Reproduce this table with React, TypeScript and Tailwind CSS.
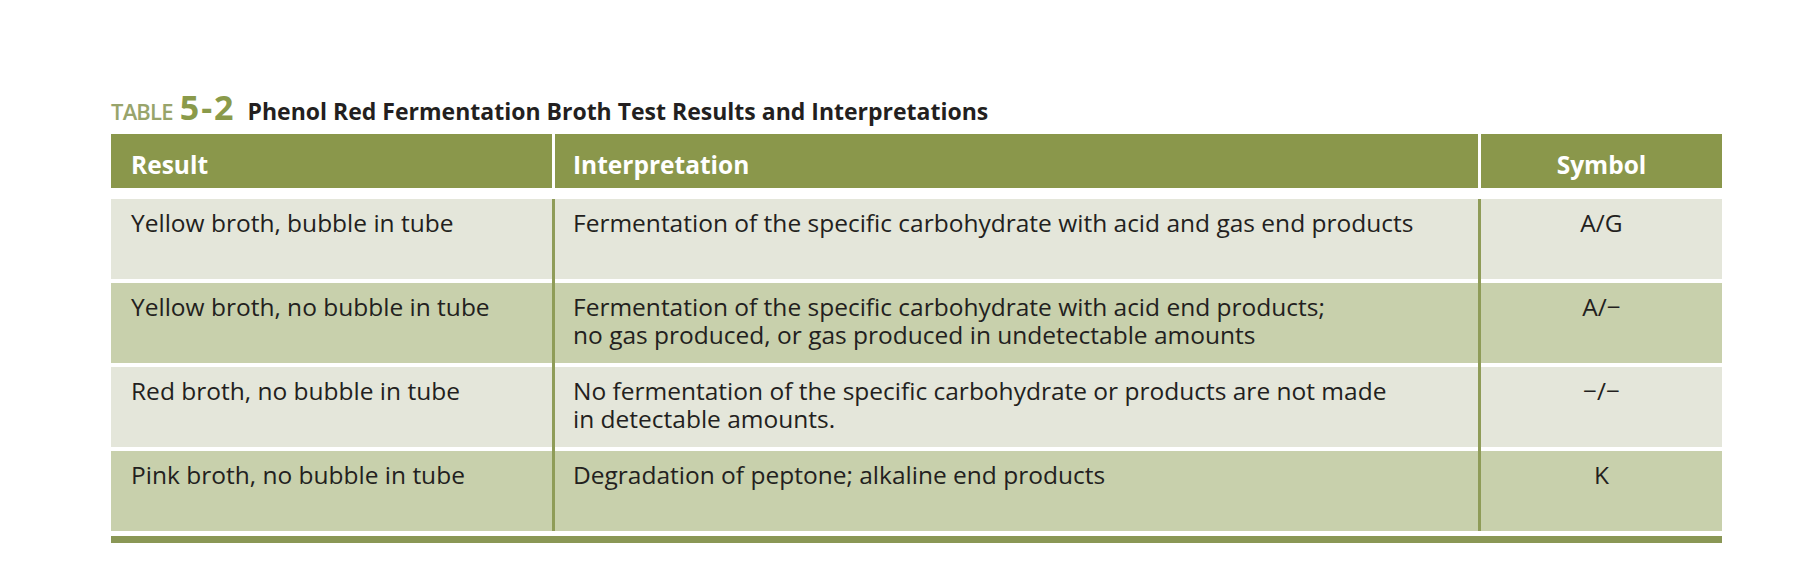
import React from "react";

type Row = { result: string; interp: string[]; symbol: string; dark: boolean };

const rows: Row[] = [
  {
    result: "Yellow broth, bubble in tube",
    interp: ["Fermentation of the specific carbohydrate with acid and gas end products"],
    symbol: "A/G",
    dark: false,
  },
  {
    result: "Yellow broth, no bubble in tube",
    interp: [
      "Fermentation of the specific carbohydrate with acid end products;",
      "no gas produced, or gas produced in undetectable amounts",
    ],
    symbol: "A/−",
    dark: true,
  },
  {
    result: "Red broth, no bubble in tube",
    interp: [
      "No fermentation of the specific carbohydrate or products are not made",
      "in detectable amounts.",
    ],
    symbol: "−/−",
    dark: false,
  },
  {
    result: "Pink broth, no bubble in tube",
    interp: ["Degradation of peptone; alkaline end products"],
    symbol: "K",
    dark: true,
  },
];

export default function App() {
  return (
    <div
      className="w-[1814px] h-[587px] bg-white pt-[92px] pl-[111px] text-[#231f20]"
      style={{ fontFamily: '"Open Sans", "Noto Sans", sans-serif' }}
    >
      <div className="w-[1611px]">
        <div className="flex items-baseline h-[31px] leading-[31px]">
          <span className="text-[22px] font-semibold text-[#98a46b] tracking-[-0.8px] mr-[7px]">TABLE</span>
          <span className="text-[34px] font-bold text-[#8a9a4a] tracking-[2px] mr-[12px]">5-2</span>
          <span className="text-[23px] font-bold">
            Phenol Red Fermentation Broth Test Results and Interpretations
          </span>
        </div>

        <div className="mt-[11px] flex h-[54px] gap-[3px] text-white font-bold text-[24.5px] leading-[28px]">
          <div className="w-[441px] bg-[#8a974b] pt-[17px] pl-[20px]">Result</div>
          <div className="flex-1 bg-[#8a974b] pt-[17px] pl-[18px]">Interpretation</div>
          <div className="w-[241px] bg-[#8a974b] pt-[17px] text-center">Symbol</div>
        </div>

        <div className="mt-[11px] flex flex-col text-[24.5px] leading-[28px]">
          {rows.map((r, i) => {
            const bg = r.dark ? "bg-[#c8d0ac]" : "bg-[#e4e6da]";
            const lineH = i < rows.length - 1 ? "h-[84px]" : "h-[80px]";
            return (
              <div key={i} className="flex items-start">
                <div className={`w-[441px] h-[80px] ${bg} pt-[10px] pl-[20px]`}>{r.result}</div>
                <div className={`w-[3px] bg-[#8f9c58] ${lineH}`} />
                <div className={`flex-1 h-[80px] ${bg} pt-[10px] pl-[18px]`}>
                  {r.interp.map((line, j) => (
                    <div key={j}>{line}</div>
                  ))}
                </div>
                <div className={`w-[3px] bg-[#8f9c58] ${lineH}`} />
                <div className={`w-[241px] h-[80px] ${bg} pt-[10px] text-center`}>{r.symbol}</div>
              </div>
            );
          })}
        </div>

        <div className="mt-[5px] h-[7px] bg-[#8a9756]" />
      </div>
    </div>
  );
}
